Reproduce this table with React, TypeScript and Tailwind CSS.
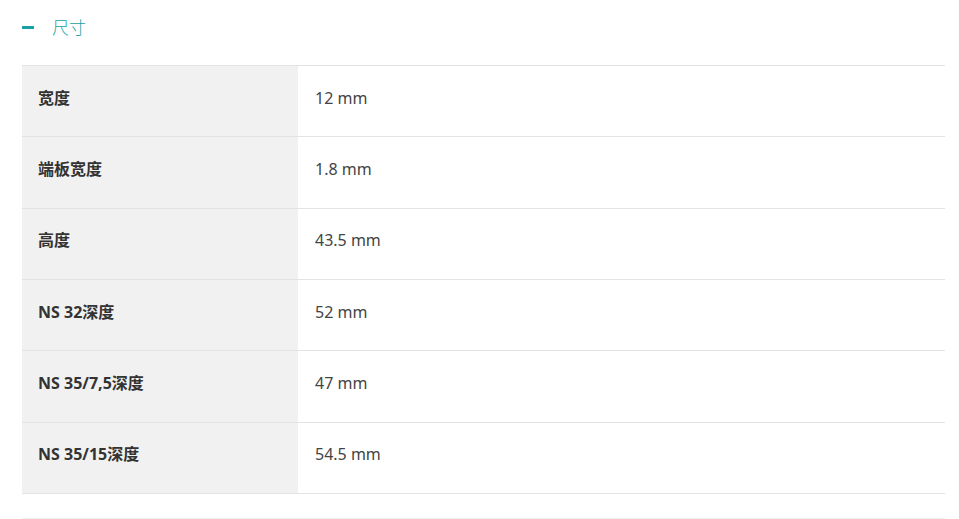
const rows = [
  { label: '宽度', value: '12 mm' },
  { label: '端板宽度', value: '1.8 mm' },
  { label: '高度', value: '43.5 mm' },
  { label: 'NS 32深度', value: '52 mm' },
  { label: 'NS 35/7,5深度', value: '47 mm' },
  { label: 'NS 35/15深度', value: '54.5 mm' },
]

export default function App() {
  return (
    <div
      className="h-[519px] w-[959px] overflow-hidden bg-white px-[22px] pr-[14px] text-[#333]"
      style={{ fontFamily: '"Noto Sans", "Noto Sans CJK SC", sans-serif' }}
    >
      <div className="flex h-[65px] items-start pt-[14px]">
        <div className="flex h-[26px] items-center gap-[18px] text-[#1a9fa6]">
          <span className="block h-[3px] w-[12px] bg-[#1a9fa6]" />
          <span className="text-[17px] font-light leading-none">尺寸</span>
        </div>
      </div>

      <div className="border-t border-[#e3e3e3]">
        {rows.map((row) => (
          <div
            key={row.label}
            className="flex h-[71.33px] border-b border-[#e3e3e3] text-[16px]"
          >
            <div className="flex w-[276px] items-center bg-[#f1f1f1] pb-[7px] pl-4 font-bold text-[#333]">
              {row.label}
            </div>
            <div className="flex flex-1 items-center pb-[7px] pl-[17px] text-[#444]">
              {row.value}
            </div>
          </div>
        ))}
      </div>

      <div className="mt-[24px] border-t border-[#f0f0f0]" />
    </div>
  )
}
